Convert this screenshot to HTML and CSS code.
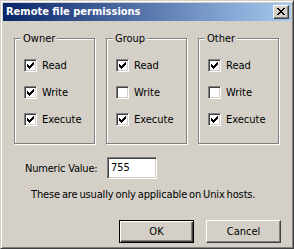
FILE: index.html
```html
<!DOCTYPE html>
<html>
<head>
<meta charset="utf-8">
<link rel="stylesheet" href="styles.css">
</head>
<body>
<div class="window">
  <div class="titlebar">
    <span class="title">Remote file permissions</span>
    <div class="close"><svg width="8" height="7" viewBox="0 0 8 7" shape-rendering="crispEdges"><path fill="#000" d="M0 0h2v1h-2z M6 0h2v1h-2z M1 1h2v1h-2z M5 1h2v1h-2z M2 2h4v1h-4z M3 3h2v1h-2z M2 4h4v1h-4z M1 5h2v1h-2z M5 5h2v1h-2z M0 6h2v1h-2z M6 6h2v1h-2z"/></svg></div>
  </div>
  <div class="body">
    <div class="groups">
      <div class="group">
        <div class="group-title">Owner</div>
        <div class="checks">
          <div class="check"><span class="box"><svg width="7" height="7" viewBox="0 0 7 7" shape-rendering="crispEdges"><path d="M6 0h1v1h-1z M5 1h2v1h-2z M0 2h1v1h-1z M4 2h3v1h-3z M0 3h2v1h-2z M3 3h3v1h-3z M0 4h5v1h-5z M1 5h3v1h-3z M2 6h1v1h-1z"/></svg></span>Read</div>
          <div class="check"><span class="box"><svg width="7" height="7" viewBox="0 0 7 7" shape-rendering="crispEdges"><path d="M6 0h1v1h-1z M5 1h2v1h-2z M0 2h1v1h-1z M4 2h3v1h-3z M0 3h2v1h-2z M3 3h3v1h-3z M0 4h5v1h-5z M1 5h3v1h-3z M2 6h1v1h-1z"/></svg></span>Write</div>
          <div class="check"><span class="box"><svg width="7" height="7" viewBox="0 0 7 7" shape-rendering="crispEdges"><path d="M6 0h1v1h-1z M5 1h2v1h-2z M0 2h1v1h-1z M4 2h3v1h-3z M0 3h2v1h-2z M3 3h3v1h-3z M0 4h5v1h-5z M1 5h3v1h-3z M2 6h1v1h-1z"/></svg></span>Execute</div>
        </div>
      </div>
      <div class="group">
        <div class="group-title">Group</div>
        <div class="checks">
          <div class="check"><span class="box"><svg width="7" height="7" viewBox="0 0 7 7" shape-rendering="crispEdges"><path d="M6 0h1v1h-1z M5 1h2v1h-2z M0 2h1v1h-1z M4 2h3v1h-3z M0 3h2v1h-2z M3 3h3v1h-3z M0 4h5v1h-5z M1 5h3v1h-3z M2 6h1v1h-1z"/></svg></span>Read</div>
          <div class="check"><span class="box"></span>Write</div>
          <div class="check"><span class="box"><svg width="7" height="7" viewBox="0 0 7 7" shape-rendering="crispEdges"><path d="M6 0h1v1h-1z M5 1h2v1h-2z M0 2h1v1h-1z M4 2h3v1h-3z M0 3h2v1h-2z M3 3h3v1h-3z M0 4h5v1h-5z M1 5h3v1h-3z M2 6h1v1h-1z"/></svg></span>Execute</div>
        </div>
      </div>
      <div class="group">
        <div class="group-title">Other</div>
        <div class="checks">
          <div class="check"><span class="box"><svg width="7" height="7" viewBox="0 0 7 7" shape-rendering="crispEdges"><path d="M6 0h1v1h-1z M5 1h2v1h-2z M0 2h1v1h-1z M4 2h3v1h-3z M0 3h2v1h-2z M3 3h3v1h-3z M0 4h5v1h-5z M1 5h3v1h-3z M2 6h1v1h-1z"/></svg></span>Read</div>
          <div class="check"><span class="box"></span>Write</div>
          <div class="check"><span class="box"><svg width="7" height="7" viewBox="0 0 7 7" shape-rendering="crispEdges"><path d="M6 0h1v1h-1z M5 1h2v1h-2z M0 2h1v1h-1z M4 2h3v1h-3z M0 3h2v1h-2z M3 3h3v1h-3z M0 4h5v1h-5z M1 5h3v1h-3z M2 6h1v1h-1z"/></svg></span>Execute</div>
        </div>
      </div>
    </div>
    <div class="numeric">
      <span class="numeric-label">Numeric Value:</span>
      <div class="input">755</div>
    </div>
    <div class="note">These are usually only applicable on Unix hosts.</div>
    <div class="buttons">
      <div class="btn default"><span>OK</span></div>
      <div class="btn"><span>Cancel</span></div>
    </div>
  </div>
</div>
</body>
</html>
```
FILE: styles.css
```css
html, body {
  margin: 0;
  padding: 0;
  background: #d4d0c8;
}
body {
  font-family: "DejaVu Sans Condensed", "DejaVu Sans", sans-serif;
  font-stretch: semi-condensed;
  font-size: 11px;
  color: #000;
}
.window {
  width: 294px;
  height: 249px;
  box-sizing: border-box;
  border: 1px solid;
  border-color: #d4d0c8 #404040 #404040 #d4d0c8;
  box-shadow: inset 1px 1px 0 #fff, inset -1px -1px 0 #808080;
  padding: 2px;
  background: #d4d0c8;
  display: flex;
  flex-direction: column;
}
.titlebar {
  height: 18px;
  flex: none;
  background: linear-gradient(to right, #0a246a, #a6caf0);
  display: flex;
  align-items: flex-start;
  justify-content: space-between;
}
.title {
  color: #fff;
  font-weight: bold;
  font-size: 11px;
  line-height: 18px;
  padding-left: 3px;
}
.close {
  width: 16px;
  height: 14px;
  box-sizing: border-box;
  margin: 2px 2px 0 0;
  background: #d4d0c8;
  border: 1px solid;
  border-color: #fff #404040 #404040 #fff;
  box-shadow: inset -1px -1px 0 #808080;
  padding: 2px 0 0 3px;
}
.close svg { display: block; }
.body {
  flex: 1;
  padding: 17px 10px 0 11px;
  display: flex;
  flex-direction: column;
}
.groups {
  display: flex;
  gap: 11px;
}
.group {
  width: 81px;
  height: 106px;
  box-sizing: border-box;
  border: 1px solid #808080;
  box-shadow: 1px 1px 0 #fff, inset 1px 1px 0 #fff;
}
.group-title {
  margin: -7px 0 0 6px;
  padding: 0 2px 0 2px;
  width: fit-content;
  background: #d4d0c8;
  line-height: 13px;
  height: 13px;
}
.checks {
  padding: 14px 0 0 9px;
  display: flex;
  flex-direction: column;
  gap: 14px;
}
.check {
  display: flex;
  align-items: center;
  height: 13px;
  line-height: 13px;
}
.box {
  width: 13px;
  height: 13px;
  box-sizing: border-box;
  flex: none;
  background: #fff;
  border: 1px solid;
  border-color: #808080 #fff #fff #808080;
  box-shadow: inset 1px 1px 0 #404040, inset -1px -1px 0 #d4d0c8;
  margin-right: 5px;
  padding: 2px 0 0 2px;
}
.box svg { display: block; }
.numeric {
  margin-top: 13px;
  display: flex;
  align-items: center;
}
.numeric-label {
  margin-left: 11px;
  width: 82px;
  letter-spacing: -0.2px;
}
.input {
  width: 50px;
  height: 22px;
  box-sizing: border-box;
  background: #fff;
  border: 1px solid;
  border-color: #808080 #fff #fff #808080;
  box-shadow: inset 1px 1px 0 #404040, inset -1px -1px 0 #d4d0c8;
  padding: 0 0 0 3px;
  line-height: 20px;
}
.note {
  margin: 9px 0 0 17px;
  line-height: 13px;
  letter-spacing: -0.15px;
  word-spacing: -1px;
}
.buttons {
  margin-top: 19px;
  display: flex;
  justify-content: flex-end;
  gap: 12px;
}
.btn {
  width: 75px;
  height: 23px;
  box-sizing: border-box;
  border: 1px solid;
  border-color: #fff #404040 #404040 #fff;
  box-shadow: inset -1px -1px 0 #808080;
  display: flex;
  align-items: center;
  justify-content: center;
  line-height: 13px;
}
.btn.default {
  border: 1px solid #000;
  box-shadow: inset 1px 1px 0 #fff, inset -1px -1px 0 #404040, inset -2px -2px 0 #808080;
}
```
